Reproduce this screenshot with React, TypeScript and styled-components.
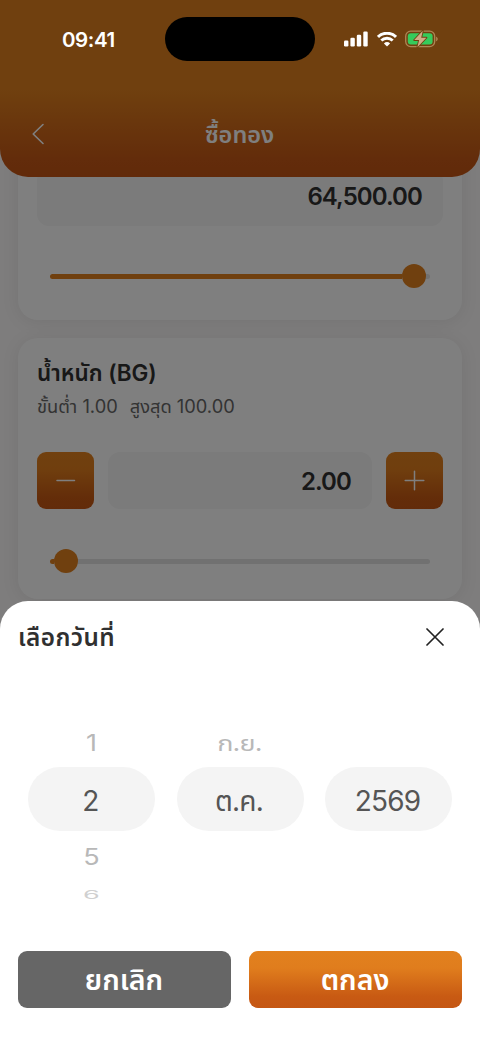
import React from "react";
import styled, { createGlobalStyle } from "styled-components";

const Global = createGlobalStyle`
  * { box-sizing: border-box; }
  body { margin: 0; background: #fff; }
  button { border: 0; padding: 0; font: inherit; }
`;

const fontStack = `Inter, "Noto Sans Thai", "Noto Sans", sans-serif`;
const orangeFill = "linear-gradient(180deg, #e2811e 0%, #e07d1d 30%, #c85a13 80%, #c55714 100%)";

const Screen = styled.div`
  position: relative;
  width: 480px;
  height: 1044px;
  overflow: hidden;
  background: #fcfafa;
  font-family: ${fontStack};
  color: #303030;
`;

const Header = styled.header`
  position: relative;
  z-index: 1;
  height: 177px;
  border-radius: 0 0 28px 28px;
  background: linear-gradient(180deg, #e0801e 0, #e0801e 90px, #c65816 160px, #c45514 177px);
  display: grid;
  grid-template-columns: 60px 1fr 60px;
  align-items: end;
  padding: 0 9px 25px;
`;

const BackButton = styled.button`
  background: none;
  height: 36px;
  display: flex;
  align-items: center;
  justify-content: center;
`;

const HeaderTitle = styled.h1`
  margin: 0;
  height: 36px;
  line-height: 37px;
  padding-right: 1px;
  text-align: center;
  font-size: 23.5px;
  font-weight: 600;
  color: #fff;
`;

const Content = styled.main`
  display: flex;
  flex-direction: column;
  gap: 18px;
  margin-top: -59px;
  padding: 0 18px;
`;

const Card = styled.section<{ $height: number; $top: number }>`
  height: ${(p) => p.$height}px;
  padding: ${(p) => p.$top}px 19px 0;
  border-radius: 20px;
  background: #fff;
  box-shadow: 0 2px 18px rgba(0, 0, 0, 0.08);
`;

const CardTitle = styled.h2`
  margin: 0;
  height: 30px;
  line-height: 30px;
  font-size: 22.5px;
  font-weight: 600;
  white-space: nowrap;
`;

const Limits = styled.p`
  margin: 3px 0 0;
  height: 31px;
  line-height: 31px;
  font-size: 18.3px;
  color: #666;
  display: flex;
  gap: 12px;
  white-space: nowrap;
`;

const AmountRow = styled.div<{ $top?: number }>`
  display: flex;
  gap: 14px;
  margin-top: ${(p) => p.$top ?? 0}px;
`;

const Amount = styled.div<{ $line?: number }>`
  flex: 1;
  height: 57px;
  line-height: ${(p) => p.$line ?? 59}px;
  padding-right: 21px;
  border-radius: 12px;
  background: #f6f6f6;
  text-align: right;
  font-size: 24px;
  font-weight: 600;
  letter-spacing: -0.9px;
`;

const StepButton = styled.button`
  width: 57px;
  height: 57px;
  border-radius: 9px;
  background: ${orangeFill};
  display: grid;
  place-items: center;
`;

const Slider = styled.div<{ $top: number }>`
  display: flex;
  align-items: center;
  height: 24px;
  margin: ${(p) => p.$top}px 13px 0;
`;

const Filled = styled.div<{ $length: number }>`
  width: ${(p) => p.$length}px;
  height: 5px;
  border-radius: 3px 0 0 3px;
  background: #e0801e;
`;

const Thumb = styled.div`
  width: 24px;
  height: 24px;
  border-radius: 50%;
  background: #e0801e;
`;

const Rest = styled.div`
  flex: 1;
  height: 5px;
  border-radius: 0 3px 3px 0;
  background: #e3e3e3;
`;

const Backdrop = styled.div`
  position: absolute;
  inset: 0;
  z-index: 2;
  background: rgba(0, 0, 0, 0.5);
`;

const StatusBar = styled.div`
  position: absolute;
  inset: 0 0 auto 0;
  z-index: 4;
  height: 77px;
  padding: 1px 42px 0 62px;
  display: grid;
  grid-template-columns: 103px 150px 1fr;
  align-items: center;
  color: #fff;
`;

const Clock = styled.time`
  font-size: 20.5px;
  font-weight: 600;
  letter-spacing: -0.4px;
`;

const Island = styled.div`
  height: 44px;
  border-radius: 22px;
  background: #000;
`;

const StatusIcons = styled.div`
  display: flex;
  align-items: center;
  justify-content: flex-end;
  gap: 8.5px;
`;

const Sheet = styled.section`
  position: absolute;
  inset: 601px 0 0 0;
  z-index: 3;
  border-radius: 28px 28px 0 0;
  background: #fff;
  padding: 18px 18px 0;
`;

const SheetHeader = styled.div`
  display: flex;
  justify-content: space-between;
  align-items: center;
  height: 36px;
  padding-right: 18px;
`;

const SheetTitle = styled.h2`
  margin: 0;
  line-height: 34px;
  font-size: 24.3px;
  letter-spacing: 0.4px;
  font-weight: 600;
`;

const CloseButton = styled.button`
  background: none;
  display: flex;
`;

const Picker = styled.div`
  display: grid;
  grid-template-columns: repeat(3, 127px);
  column-gap: 21.5px;
  margin: 69px 10px 0;
`;

const Wheel = styled.div`
  display: grid;
  grid-template-rows: 43px 64px 52px 24px;
  text-align: center;
`;

const Option = styled.div<{ $squash: number; $tone: string; $lift?: number }>`
  align-self: center;
  font-size: 27px;
  line-height: 30px;
  letter-spacing: -0.8px;
  padding-right: 1px;
  margin-bottom: ${(p) => p.$lift ?? 0}px;
  color: ${(p) => p.$tone};
  transform: scaleY(${(p) => p.$squash});
`;

const Chosen = styled.div`
  border-radius: 32px;
  background: #f4f4f4;
  line-height: 68px;
  height: 64px;
  padding-right: 2px;
  font-size: 28px;
  letter-spacing: -0.8px;
  color: #555;
`;

const Actions = styled.div`
  display: grid;
  grid-template-columns: 1fr 1fr;
  gap: 18px;
  margin-top: 44px;
`;

const Action = styled.button<{ $primary?: boolean }>`
  height: 57px;
  padding: 3px 1px 0 0;
  border-radius: 9px;
  background: ${(p) => (p.$primary ? orangeFill : "#666")};
  color: #fff;
  font-family: ${fontStack};
  font-size: 28.5px;
  font-weight: 600;
`;

const SignalIcon = () => (
  <svg width="24" height="16" viewBox="0 0 24 16" fill="#fff">
    <rect x="0" y="9.6" width="4.4" height="5.8" rx="1.2" />
    <rect x="6.4" y="6.7" width="4.4" height="8.7" rx="1.2" />
    <rect x="12.8" y="3.7" width="4.4" height="11.7" rx="1.2" />
    <rect x="19.3" y="0.5" width="4.4" height="14.9" rx="1.2" />
  </svg>
);

const WifiIcon = () => (
  <svg width="20" height="15" viewBox="0 0 20 15" fill="none" stroke="#fff" strokeWidth="2.9">
    <path d="M1 4.9a12.8 12.8 0 0 1 18 0" />
    <path d="M4.3 8.5a8.2 8.2 0 0 1 11.4 0" />
    <path d="M6.9 11.5a4.5 4.5 0 0 1 6.2 0L10 14.6Z" fill="#fff" stroke="none" />
  </svg>
);

const BatteryIcon = () => (
  <svg width="33" height="18" viewBox="0 0 33 18">
    <rect x="0.7" y="1.2" width="29" height="15.4" rx="5" fill="none" stroke="#ad8655" strokeWidth="1.3" />
    <path d="M31.1 6.7c2.2.7 2.2 3.8 0 4.5Z" fill="#ad8655" />
    <rect x="2.8" y="3.3" width="24.8" height="11.2" rx="3" fill="#35cb5b" />
    <path
      d="M17.8.8 9.2 10.1h4.9L12.4 17.2 21.4 7.7h-5.2Z"
      fill="#d0ac86"
      stroke="#70400f"
      strokeWidth="1.8"
      strokeLinejoin="round"
      paintOrder="stroke"
    />
  </svg>
);

export default function App() {
  return (
    <Screen>
      <Global />
      <Header>
        <BackButton aria-label="ย้อนกลับ">
          <svg width="14" height="22" viewBox="0 0 14 22" fill="none" stroke="#fff" strokeWidth="1.6" strokeLinecap="round" strokeLinejoin="round">
            <path d="M11 1.5 1.2 11 11 20.5" />
          </svg>
        </BackButton>
        <HeaderTitle>ซื้อทอง</HeaderTitle>
      </Header>
      <Content>
        <Card $height={202} $top={51}>
          <AmountRow>
            <Amount $line={56}>64,500.00</Amount>
          </AmountRow>
          <Slider $top={38}>
            <Filled $length={352} />
            <Thumb />
            <Rest />
          </Slider>
        </Card>
        <Card $height={261} $top={20}>
          <CardTitle>น้ำหนัก (BG)</CardTitle>
          <Limits>
            <span>ขั้นต่ำ 1.00</span>
            <span>สูงสุด 100.00</span>
          </Limits>
          <AmountRow $top={30}>
            <StepButton aria-label="ลด">
              <svg width="22" height="22" stroke="#fff" strokeWidth="1.5" strokeLinecap="round">
                <path d="M2 10.5h17.5" />
              </svg>
            </StepButton>
            <Amount>2.00</Amount>
            <StepButton aria-label="เพิ่ม">
              <svg width="22" height="22" stroke="#fff" strokeWidth="1.5" strokeLinecap="round">
                <path d="M1.2 10.5h18.6M10.5 1.2v18.6" />
              </svg>
            </StepButton>
          </AmountRow>
          <Slider $top={40}>
            <Filled $length={4} />
            <Thumb />
            <Rest />
          </Slider>
        </Card>
      </Content>
      <Backdrop />
      <StatusBar>
        <Clock>09:41</Clock>
        <Island />
        <StatusIcons>
          <SignalIcon />
          <WifiIcon />
          <BatteryIcon />
        </StatusIcons>
      </StatusBar>
      <Sheet>
        <SheetHeader>
          <SheetTitle>เลือกวันที่</SheetTitle>
          <CloseButton aria-label="ปิด">
            <svg width="18" height="18" fill="none" stroke="#222" strokeWidth="1.7" strokeLinecap="round">
              <path d="M1 1l16 16M17 1 1 17" />
            </svg>
          </CloseButton>
        </SheetHeader>
        <Picker>
          <Wheel>
            <Option $squash={0.82} $tone="#b8b8b8" $lift={4}>1</Option>
            <Chosen>2</Chosen>
            <Option $squash={0.82} $tone="#b8b8b8" $lift={-2}>5</Option>
            <Option $squash={0.42} $tone="#d0d0d0">6</Option>
          </Wheel>
          <Wheel>
            <Option $squash={0.82} $tone="#b8b8b8" $lift={4}>ก.ย.</Option>
            <Chosen>ต.ค.</Chosen>
          </Wheel>
          <Wheel>
            <span />
            <Chosen>2569</Chosen>
          </Wheel>
        </Picker>
        <Actions>
          <Action>ยกเลิก</Action>
          <Action $primary>ตกลง</Action>
        </Actions>
      </Sheet>
    </Screen>
  );
}
